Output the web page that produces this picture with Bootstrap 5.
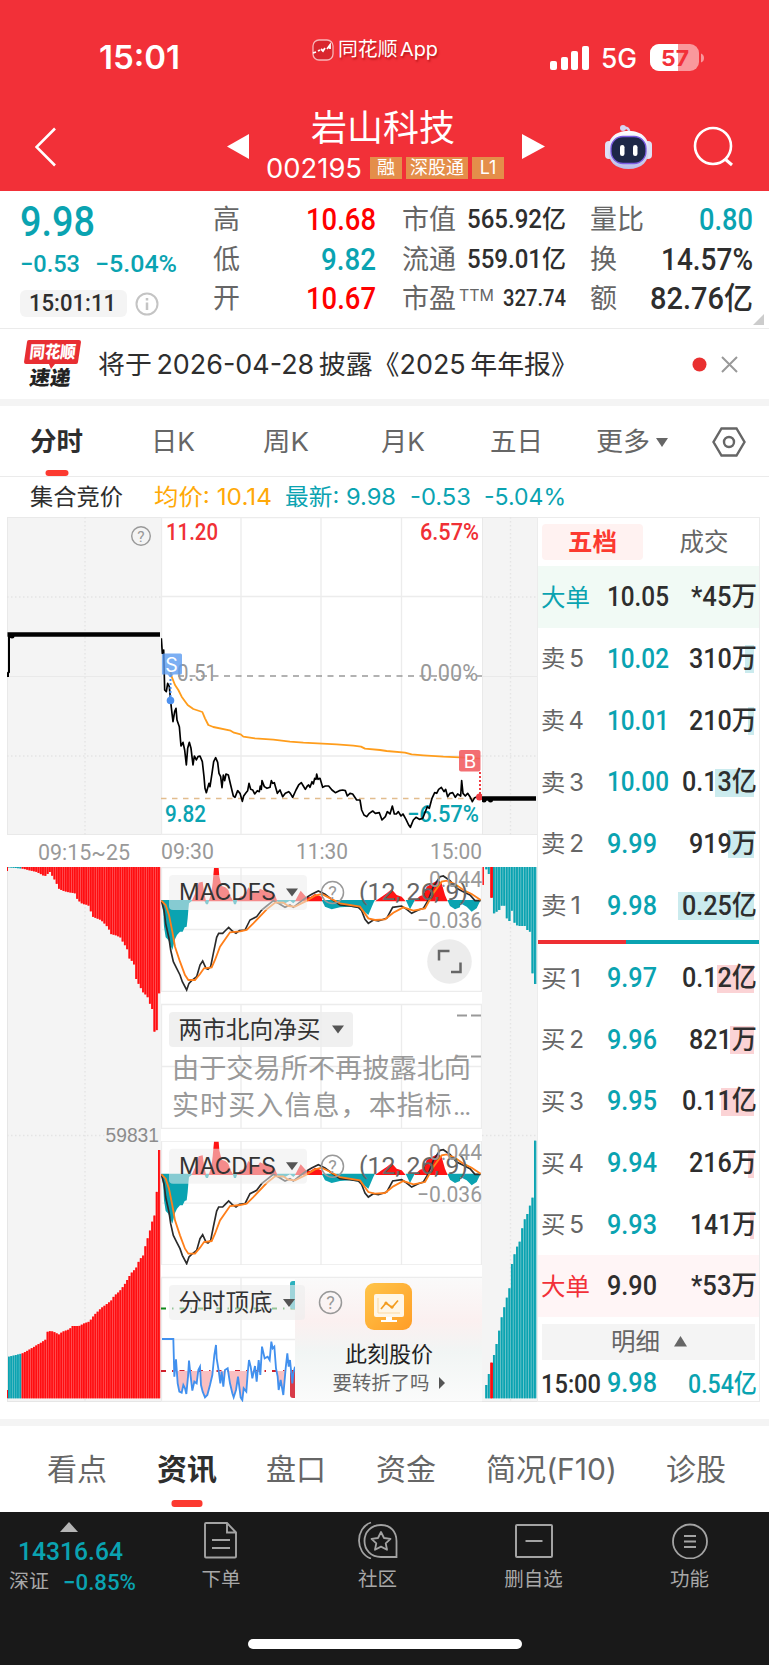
<!DOCTYPE html>
<html lang="zh-CN">
<head>
<meta charset="utf-8">
<meta name="viewport" content="width=device-width, initial-scale=1">
<title>岩山科技 002195</title>
<link href="https://cdn.jsdelivr.net/npm/bootstrap@5.3.0/dist/css/bootstrap.min.css" rel="stylesheet">
<style>
:root{--teal:#0aa3b1;--up:#f72f33;--ink:#2e2e2e;--dim:#666;--ui:Inter,"Noto Sans CJK SC",sans-serif;--num:Roboto,"Noto Sans CJK SC",sans-serif}
body{font-family:var(--ui);color:var(--ink);background:#fff;width:769px;line-height:1;overflow-x:hidden}
svg{display:block;flex:none}
svg text{font-family:var(--num)}
.fit{display:inline-block;white-space:nowrap;transform-origin:0 50%;flex:none}
.din{font-family:var(--num);font-weight:500}
.teal{color:var(--teal)}.up{color:#f00}.dim{color:var(--dim)}
.abs-grid{display:grid;align-items:center}
.top-red{background:#f23038;height:191px;color:#fff}
.status-row{height:99px;padding-top:17px;grid-template-columns:99px 213px 26px 212px 51px 49px 1fr}
.title-row{height:92px;padding-top:4px;grid-template-columns:35px 192px 39px 256px 83px 88px 1fr}
.tagbox{background:#e48e4a;height:22px;font-size:18px;display:flex;align-items:center;justify-content:center}
.quote{height:137px;padding:0 15px 0 20px;display:grid;grid-template-columns:193px 163px 26px 164px 24px 163px}
.qcol{padding-top:9px}
.qcol>div{height:39.5px;display:flex;align-items:center;justify-content:space-between}
.qcol .dim{font-size:27px}
.pill-time{background:#f4f4f4;border-radius:6px;width:107px;height:27px;padding-left:9px}
.notice{height:71px;border-top:1.5px solid #ebebeb;grid-template-columns:24px 74px 594px 29px 1fr}
.band{background:#f4f4f4;height:7px}
.periods{height:71px;padding-top:2px;border-bottom:1.5px solid #ebebeb;font-size:26px;color:var(--dim);grid-template-columns:30px 121px 112px 118px 109px 106px 60px 56px 1fr}
.on{color:var(--ink);font-weight:700;position:relative}
.on::after{content:"";position:absolute;left:50%;transform:translateX(-50%);background:#fc3a30;border-radius:3px}
.periods .on::after{width:23px;height:6px;bottom:-21px}
.legend-row{height:40px;padding-top:1px;font-size:23px;grid-template-columns:30px 124px 131px 125px 74px 1fr}
.board{padding:0 9px 0 7px;height:885px}
.col-a{width:154px}.col-m{width:321px}.col-c{width:55px}
.col-b{width:223px;border:1px solid #ececec}
.strip{height:32px}
.seg{display:grid;grid-template-columns:1fr 1fr;height:48px;padding:6px 1px 6px 4px;font-size:24.5px;text-align:center}
.seg span{height:36px;line-height:36px;border-radius:4px}
.seg .sel{background:#fff2f1;color:#fc3a30;font-weight:700;width:101px}
.lv{height:61.65px;display:grid;grid-template-columns:66px 1fr auto;align-items:center;padding:2px 2px 0 3px}
.lv .nm{color:var(--dim);font-size:24px;word-spacing:-3px}
.lv .vol{position:relative;text-align:right}
.lv .vol i{position:absolute;right:3px;top:50%;height:28px;margin-top:-14px}
.lv .vol .fit{position:relative}
.lv .din{font-size:27px}
.sell i{background:#cbebee}.buy i{background:#fbd3d5}
.ratio{height:11px;padding-top:4px}
.ratio-line{height:4.5px;background:linear-gradient(90deg,#ee2f33 40%,#0aa3b1 40%)}
.more{background:#f4f4f4;margin:7px 4px 0;height:36px;font-size:24px;color:var(--dim)}
.news{height:86px;padding-top:2px;font-size:29.5px;color:var(--dim);grid-template-columns:47px 110px 109px 110px 110px 180px 1fr}
.news .on::after{width:31px;height:7px;bottom:-22px}
.dock{background:#191919;height:153px;color:#a8a8a8;font-size:19.5px;position:relative}
.dock-in{display:grid;grid-template-columns:143px 156px 157px 155px 157px;height:86px}
.dock-in>div{display:flex;flex-direction:column;align-items:center;padding-top:9px}
.dock-in>div>svg{margin-bottom:11px}
.homebar{width:274px;height:10px;border-radius:5px;background:#fff;margin:41px 0 0 248px}
</style>
</head>
<body>
<header class="top-red">
  <div class="status-row abs-grid">
    <span></span>
    <span class="fit" data-w="81" style="font-size:32px;font-weight:600">15:01</span>
    <svg width="22" height="22" viewBox="0 0 22 22" style="margin-top:-17px"><rect x="1" y="1" width="20" height="20" rx="6" fill="#d9262e" stroke="#fff" stroke-opacity=".65" stroke-width="1.300"/><path d="M1 14l3-1m2-1l2-1m1-1l2 2 2-3m2 1l3-4v4" stroke="#fff" stroke-width="1.800" fill="none"/></svg>
    <span class="fit" data-w="100" style="font-size:19px;margin-top:-17px;word-spacing:-3px;text-shadow:1px 2px 2px #8008">同花顺 App</span>
    <svg width="40" height="26" viewBox="0 0 40 26" fill="#fff"><rect y="16" width="7" height="9" rx="2"/><rect x="11" y="12" width="7" height="13" rx="2"/><rect x="21" y="6" width="7" height="19" rx="2"/><rect x="32" y="1" width="7" height="24" rx="2"/></svg>
    <span class="fit" data-w="36" style="font-size:27px;font-weight:500">5G</span>
    <svg width="56" height="28" viewBox="0 0 56 28"><defs><clipPath id="bt"><rect width="49" height="27" rx="9"/></clipPath></defs><g clip-path="url(#bt)"><rect width="49" height="27" fill="#fff" fill-opacity=".5"/><rect width="28" height="27" fill="#fff"/></g><path d="M51 9.500q3 1 3 4.500t-3 4.500z" fill="#fff" fill-opacity=".5"/><text x="11" y="21.500" font-size="22" font-weight="700" fill="#f23038" textLength="28" lengthAdjust="spacingAndGlyphs" style="font-family:Inter">57</text></svg>
  </div>
  <div class="title-row abs-grid">
    <span></span>
    <svg width="22" height="40" viewBox="0 0 22 40"><path d="M20 1.500L1.500 20 20 38.500" fill="none" stroke="#fff" stroke-width="2.600"/></svg>
    <svg width="22" height="26" viewBox="0 0 22 26"><path d="M22 0v25L0 12.500z" fill="#fff"/></svg>
    <div>
      <div class="fit" data-w="144" style="font-size:36px;margin:-3px 0 9px 45px">岩山科技</div>
      <div class="d-flex align-items-center"><span class="fit" data-w="96" style="font-size:27px">002195</span><span class="tagbox" style="width:32px;margin-left:8px">融</span><span class="tagbox" style="width:62px;margin-left:4px">深股通</span><span class="tagbox" style="width:32px;margin-left:4px">L1</span></div>
    </div>
    <svg width="23" height="26" viewBox="0 0 23 26"><path d="M0 0v25l23-12.500z" fill="#fff"/></svg>
    <svg width="48" height="46" viewBox="0 0 48 46"><defs><linearGradient id="rb" x2="0" y2="1"><stop stop-color="#fff"/><stop offset="1" stop-color="#b9bde8"/></linearGradient></defs><circle cx="18" cy="4" r="3" fill="#d6d4f2"/><path d="M18 4q7-1 6 5" stroke="#d6d4f2" stroke-width="2.500" fill="none"/><rect y="17" width="8" height="18" rx="4" fill="#dfe0f6"/><rect x="39" y="17" width="8" height="18" rx="4" fill="#dfe0f6"/><path d="M23.500 7C38 7 44 15 44 26S37 45 23.500 45 3 37 3 26 9 7 23.500 7z" fill="url(#rb)"/><rect x="6" y="12.500" width="35" height="27" rx="12" fill="#1d2747" stroke="#7a5be0" stroke-width="1.300"/><rect x="15" y="21" width="4.500" height="11" rx="2.200" fill="#fff"/><rect x="28" y="21" width="4.500" height="11" rx="2.200" fill="#fff"/></svg>
    <svg width="42" height="42" viewBox="0 0 42 42"><circle cx="20" cy="20" r="18" fill="none" stroke="#fff" stroke-width="2.600"/><path d="M32 33l7 6" stroke="#fff" stroke-width="3"/></svg>
  </div>
</header>

<section class="quote">
  <div>
    <div class="fit din teal d-block" data-w="75" style="font-size:43px;margin-top:9px">9.98</div>
    <div class="d-flex din teal" style="font-size:24px;margin-top:9px"><span class="fit" data-w="60" style="margin-right:15px">−0.53</span><span class="fit" data-w="82">−5.04%</span></div>
    <div class="d-flex align-items-center" style="margin-top:14px"><span class="pill-time d-flex align-items-center"><span class="fit din" data-w="87" style="font-size:24.500px">15:01:11</span></span>
    <svg class="ms-2" width="24" height="24" viewBox="0 0 24 24" fill="none" stroke="#c4c4c4" stroke-width="2"><circle cx="12" cy="12" r="10.500"/><path d="M12 10.500v7.500M12 6v2.500" stroke-width="2.500"/></svg></div>
  </div>
  <div class="qcol">
    <div><span class="dim">高</span><span class="fit din up" data-w="70" style="font-size:31px">10.68</span></div>
    <div><span class="dim">低</span><span class="fit din teal" data-w="55" style="font-size:31px">9.82</span></div>
    <div><span class="dim">开</span><span class="fit din up" data-w="70" style="font-size:31px">10.67</span></div>
  </div>
  <div></div>
  <div class="qcol">
    <div><span class="dim">市值</span><span class="fit din" data-w="99" style="font-size:25px">565.92亿</span></div>
    <div><span class="dim">流通</span><span class="fit din" data-w="99" style="font-size:25px">559.01亿</span></div>
    <div><span class="dim">市盈</span><span class="fit dim" data-w="35" style="font-size:16px;margin:-7px 0 0 3px">TTM</span><span class="fit din ms-auto" data-w="63" style="font-size:23px">327.74</span></div>
  </div>
  <div></div>
  <div class="qcol position-relative">
    <div><span class="dim">量比</span><span class="fit din teal" data-w="54" style="font-size:31px">0.80</span></div>
    <div><span class="dim">换</span><span class="fit din" data-w="92" style="font-size:31px">14.57%</span></div>
    <div><span class="dim">额</span><span class="fit din" data-w="103" style="font-size:31px">82.76亿</span></div>
    <svg class="position-absolute" style="right:-11px;bottom:3px" width="11" height="11"><path d="M11 0v11H0z" fill="#ccc"/></svg>
  </div>
</section>

<section class="notice abs-grid">
  <span></span>
  <svg width="58" height="48" viewBox="0 0 58 48" overflow="visible"><path d="M5 0h50q2 0 2 2l-3 20q0 2-2 2H31l-4 5-2-5H2q-2 0-2-2L3 2q0-2 2-2z" fill="#e82e32"/><text x="5" y="18.500" font-size="17" font-weight="900" fill="#fff" textLength="46" lengthAdjust="spacingAndGlyphs" transform="skewX(-6) translate(2 0)">同花顺</text><text x="6" y="45" font-size="20" font-weight="900" fill="#222" textLength="41" lengthAdjust="spacingAndGlyphs" transform="skewX(-8) translate(5 0)">速递</text></svg>
  <span class="fit" data-w="480" style="font-size:26.500px;word-spacing:-3px">将于 2026-04-28 披露《2025 年年报》</span>
  <svg width="15" height="15"><circle cx="7.500" cy="7.500" r="7" fill="#e93030"/></svg>
  <svg width="17" height="17" viewBox="0 0 17 17"><path d="M1 1l15 15M16 1L1 16" stroke="#999" stroke-width="2"/></svg>
</section>
<div class="band"></div>

<nav class="periods abs-grid">
  <span></span><span class="fit on" data-w="53">分时</span><span class="fit" data-w="44">日K</span><span class="fit" data-w="46">周K</span><span class="fit" data-w="44">月K</span><span class="fit" data-w="53">五日</span><span class="fit" data-w="54">更多</span>
  <svg width="12" height="9"><path d="M0 0h12L6 9z" fill="#666"/></svg>
  <svg width="34" height="30" viewBox="0 0 34 30" fill="none" stroke="#666" stroke-width="2.400"><path d="M9.500 1.500h15L32.500 15l-8 13.500h-15L1.500 15z"/><circle cx="17" cy="15" r="5"/></svg>
</nav>
<div class="legend-row abs-grid">
  <span></span><span class="fit" data-w="93">集合竞价</span><span class="fit" data-w="118" style="color:#ffa908">均价: 10.14</span><span class="fit teal" data-w="111">最新: 9.98</span><span class="fit teal" data-w="61">-0.53</span><span class="fit teal" data-w="82">-5.04%</span>
</div>

<main class="board d-flex">
  <div class="col-a">
    <svg width="154" height="318" viewBox="7 517 154 318">
      <rect x="7" y="517" width="154" height="318" fill="#f4f4f4"/>
      <path d="M7 517.500h154M7 676.500h154M7 834.500h154M7.500 517v318" stroke="#e9e9e9"/>
      <path d="M85 517v318M7 597h154M7 756h154" stroke="#e4e4e4" stroke-width="1.300" stroke-dasharray="1.500 2.500"/>
      <path d="M8 677v-4l1-1v-37" stroke="#000" stroke-width="2" fill="none"/><path d="M7.500 634.500h152.500" stroke="#000" stroke-width="4.500"/><circle cx="12" cy="636" r="2.500"/>
      <circle cx="141" cy="536" r="9.300" fill="none" stroke="#999" stroke-width="1.400"/><text x="141" y="541.500" font-size="15.500" fill="#999" text-anchor="middle">?</text>
    </svg>
    <div class="strip"><svg width="154" height="32" viewBox="7 835 154 32" fill="#999" font-size="22"><text x="38" y="860" textLength="92" lengthAdjust="spacingAndGlyphs">09:15~25</text></svg></div>
    <svg width="154" height="535" viewBox="7 867 154 535">
      <rect x="7" y="867" width="154" height="535" fill="#f4f4f4"/>
      <path d="M7.500 867v535M7 1401.500h154" stroke="#e6e6e6"/>
      <path d="M85 867v535M7 1135.500h98" stroke="#e4e4e4" stroke-width="1.300" stroke-dasharray="1.500 2.500"/>
      <g id="volA"></g>
      <text x="105.500" y="1142" font-size="19.500" fill="#8c8c8c" textLength="53.500" lengthAdjust="spacingAndGlyphs" style="font-family:'Liberation Sans'">59831</text>
    </svg>
  </div>

  <div class="col-m">
    <svg width="321" height="318" viewBox="161 517 321 318">
      <path d="M161 517.500h321M161 596.500h321M161 756h321M161 834.500h321M161.500 517v318M241 517v318M321 517v318M401.500 517v318" stroke="#ececec" stroke-width="1.300" fill="none"/>
      <path d="M161 798.500h321" stroke="#e2bd8e" stroke-width="1.500" stroke-dasharray="5.500 5.500"/>
      <path d="M178 676h304" stroke="#999" stroke-width="1.500" stroke-dasharray="6 5.500"/>
      <g font-size="23" font-weight="500">
        <text x="166" y="539.500" fill="#f03035" textLength="52" lengthAdjust="spacingAndGlyphs">11.20</text>
        <text x="420" y="539.500" fill="#f03035" textLength="59" lengthAdjust="spacingAndGlyphs">6.57%</text>
        <text x="165" y="821.500" fill="#0aa3b1" textLength="41" lengthAdjust="spacingAndGlyphs">9.82</text>
        <text x="407" y="821.500" fill="#0aa3b1" textLength="72" lengthAdjust="spacingAndGlyphs">−6.57%</text>
        <g fill="#999" font-weight="400"><text x="177" y="680.500" textLength="40" lengthAdjust="spacingAndGlyphs">0.51</text><text x="420" y="680.500" textLength="58" lengthAdjust="spacingAndGlyphs">0.00%</text></g>
      </g>
      <g fill="none" stroke-linejoin="round">
        <polyline transform="translate(0 510) scale(.33333)" stroke="#ff9d1c" stroke-width="5.500" points="510,480 515,500 525,525 535,540 545,560 563,585 580,597 607,606 615,625 625,645 640,651 692,662 702,668 722,673 730,680 765,685 820,689 870,695 910,698 1010,703 1060,707 1083,710 1095,716 1140,720 1160,723 1215,728 1235,733 1270,736 1330,740 1380,742 1440,746"/>
        <polyline transform="translate(0 510) scale(.33333)" stroke="#000" stroke-width="5" points="484,385 487,430 491,420 494,540 499,545 503,520 508,530 512,575 516,610 519,635 524,605 528,595 531,630 538,650 543,708 549,697 554,720 559,765 563,715 568,697 573,715 579,765 583,738 589,750 594,740 600,738 607,755 612,800 615,835 619,848 627,820 630,830 636,790 641,755 647,743 653,757 657,790 662,800 666,833 670,795 674,812 678,792 685,795 692,825 700,858 705,862 713,842 720,850 727,874 731,858 738,848 743,842 747,820 752,838 758,840 764,852 772,842 778,845 781,828 784,838 786,812 793,830 801,835 810,832 814,812 818,820 823,818 832,850 840,840 848,860 856,850 866,845 871,850 878,862 888,840 896,825 904,818 910,828 916,838 922,828 926,825 930,832 936,815 940,822 944,805 948,808 950,792 954,808 960,805 968,832 976,828 986,828 996,840 1006,848 1018,842 1028,840 1036,842 1042,858 1050,850 1058,852 1070,870 1080,870 1085,900 1092,915 1100,920 1108,910 1118,903 1126,910 1138,908 1146,930 1156,920 1162,905 1170,912 1177,888 1183,912 1189,912 1195,905 1203,918 1209,912 1218,928 1226,945 1231,952 1240,930 1248,922 1258,928 1268,925 1276,905 1282,890 1288,895 1296,865 1304,848 1310,850 1316,838 1324,832 1332,845 1337,838 1343,860 1350,850 1358,848 1366,862 1373,852 1382,858 1385,812 1389,850 1396,858 1403,850 1411,862 1417,875 1424,863 1432,860 1440,860"/>
      </g>
      <path d="M170.500 675v24" stroke="#4c90ee" stroke-width="2" stroke-dasharray="2 2"/><circle cx="170.500" cy="700.500" r="3.800" fill="#4c90ee"/>
      <path d="M163.500 653.500h17q1.500 0 1.500 1.500v18q0 1.500-1.500 1.500h-7l-3 3-3-3h-5.500v-20z" fill="#5b9bf0" fill-opacity=".8"/><text x="171.500" y="671.500" font-size="19.500" fill="#fff" text-anchor="middle" style="font-family:Inter">S</text>
      <path d="M480 772v24" stroke="#ef3b40" stroke-width="2" stroke-dasharray="2 2"/><circle cx="479.500" cy="797" r="3.500" fill="#ef3b40"/>
      <rect x="459" y="750" width="21.500" height="21.500" rx="2" fill="#f15a5e" fill-opacity=".88"/><text x="470" y="768" font-size="19" fill="#fff" text-anchor="middle" style="font-family:Inter">B</text>
    </svg>
    <div class="strip"><svg width="321" height="32" viewBox="161 835 321 32" fill="#999" font-size="22"><text x="161" y="859" textLength="53" lengthAdjust="spacingAndGlyphs">09:30</text><text x="296" y="859" textLength="52" lengthAdjust="spacingAndGlyphs">11:30</text><text x="430" y="859" textLength="52" lengthAdjust="spacingAndGlyphs">15:00</text></svg></div>

    <svg width="321" height="125" viewBox="161 867 321 125">
      <defs><g id="macd">
        <path d="M161 867.500h321M161 929.500h321M161 991.300h321M161.500 867v125M241 867v125M321 867v125M401.500 867v125M481.500 867v125" stroke="#ececec" stroke-width="1.300" fill="none"/>
        <g transform="translate(0 850) scale(.33333)">
          <path fill="#0aa3b1" d="M484,150 490,190 492,230 497,262 505,270 517,300 525,268 531,255 540,245 548,245 554,232 560,230 563,205 565,180 567,160 580,150M612,150 618,163 624,163 628,150M698,150 702,163 708,163 712,150M828,150 840,162 855,160 870,152 880,160 890,150M965,150 975,170 995,178 1020,172 1050,170 1080,175 1105,195 1120,160 1125,150M1217,150 1230,178 1242,155 1245,150M1342,150 1350,168 1365,178 1380,172 1381,160 1400,170 1415,185 1430,175 1442,150z"/>
          <path fill="#ff1414" d="M575,154 588,125 596,98 608,95 612,125 618,154M626,154 634,130 638,98 642,54 656,54 658,80 665,108 676,112 685,120 692,140 700,154M710,154 720,140 735,135 745,112 760,128 772,128 780,116 800,125 825,135 832,154M885,154 902,122 918,140 930,142 945,132 965,140 967,154M1125,154 1145,140 1160,130 1175,118 1190,135 1205,140 1217,154M1242,154 1260,138 1270,135 1280,110 1300,98 1315,90 1325,100 1335,135 1343,154z"/>
          <polyline fill="none" stroke="#2b2b2b" stroke-width="5" points="484,152 492,180 497,220 507,265 512,300 520,335 530,355 540,375 547,395 560,420 567,400 575,392 590,380 600,345 608,333 618,355 624,358 632,350 640,310 650,262 656,250 668,250 675,243 686,232 697,243 708,250 718,242 735,240 750,210 770,200 785,180 800,168 820,152 835,160 855,172 870,165 880,172 895,160 915,145 935,133 955,123 975,133 995,148 1020,165 1050,168 1075,172 1085,182 1095,208 1105,220 1120,210 1135,213 1160,205 1178,172 1205,168 1220,178 1235,190 1255,180 1270,175 1285,150 1300,110 1320,80 1330,78 1350,92 1370,115 1390,125 1410,135 1425,152 1442,152"/>
          <polyline fill="none" stroke="#ff7f1a" stroke-width="5.500" points="484,152 497,165 507,195 517,245 525,290 540,335 555,375 565,390 585,390 600,372 612,355 635,352 645,330 660,290 690,247 720,244 740,240 760,220 800,178 825,158 850,158 865,168 885,170 915,155 945,137 965,132 985,142 1020,160 1080,170 1105,205 1125,210 1155,208 1180,188 1210,172 1240,182 1275,175 1300,130 1325,95 1340,92 1365,102 1390,120 1415,132 1442,150"/>
        </g>
        <rect x="169" y="875" width="138" height="35" rx="4" fill="#ececec" fill-opacity=".55"/>
        <path d="M286 888.500h12l-6 8z" fill="#555"/>
        <text x="179" y="900" font-size="22.500" fill="#333" textLength="97" lengthAdjust="spacingAndGlyphs" style="font-family:Inter">MACDFS</text>
        <circle cx="332.500" cy="892.500" r="11" fill="none" stroke="#999" stroke-width="1.500"/><text x="332.500" y="899" font-size="18" fill="#999" text-anchor="middle">?</text>
        <text x="359" y="900" font-size="23" fill="#666" textLength="109" lengthAdjust="spacingAndGlyphs">(12, 26, 9)</text>
        <g font-size="22.500" fill="#999"><text x="429" y="886.500" textLength="53" lengthAdjust="spacingAndGlyphs">0.044</text><text x="417" y="928" textLength="65" lengthAdjust="spacingAndGlyphs">−0.036</text></g>
      </g></defs>
      <use href="#macd"/>
      <circle cx="449.500" cy="961.500" r="22.300" fill="#ececec"/><path d="M439 960.500v-9.500h10.500M451 972h9.500v-9.500" fill="none" stroke="#666" stroke-width="2.500"/>
    </svg>

    <svg width="321" height="149" viewBox="161 992 321 149">
      <path d="M161 1004.500h321M161 1066.500h321M161 1128.300h321M161.500 1004v124M241 1004v124M321 1004v124M401.500 1004v124M481.500 1004v124" stroke="#ececec" stroke-width="1.300" fill="none"/>
      <path d="M457 1015.500h10m4 0h10M457 1056.500h10m4 0h10" stroke="#999" stroke-width="1.800"/>
      <rect x="169" y="1012" width="184" height="35" rx="4" fill="#ececec" fill-opacity=".8"/>
      <text x="178.500" y="1038" font-size="24" fill="#333" textLength="142" lengthAdjust="spacingAndGlyphs">两市北向净买</text><path d="M332 1025.500h12l-6 8z" fill="#555"/>
      <g font-size="27" fill="#999"><text x="172" y="1077.500" textLength="299" lengthAdjust="spacingAndGlyphs">由于交易所不再披露北向</text><text x="172" y="1115" textLength="299" lengthAdjust="spacing">实时买入信息，本指标…</text></g>
    </svg>
    <svg width="321" height="124" viewBox="161 867.300 321 124"><use href="#macd"/></svg>
    <svg width="321" height="137" viewBox="161 1265 321 137">
      <defs><clipPath id="low"><path d="M161 1371h134v31H161z"/></clipPath><clipPath id="lft"><path d="M161 1265h134v137H161z"/></clipPath>
      <linearGradient id="pg" x2="0" y2="1"><stop stop-color="#fafafa"/><stop offset=".35" stop-color="#fbf0f0"/><stop offset=".6" stop-color="#f1f5f4"/><stop offset="1" stop-color="#fbfbfb"/></linearGradient></defs>
      <path d="M161 1277.500h321M161 1339.500h134M161 1401.300h321M161.500 1277v124M241 1277v124" stroke="#ececec" stroke-width="1.300" fill="none"/>
      <path d="M161 1308.500h134" stroke="#118a1c" stroke-width="2" stroke-dasharray="5 6 1.500 6"/><path d="M161 1371h134" stroke="#cf1f2b" stroke-width="2" stroke-dasharray="5 6 1.500 6"/>
      <g clip-path="url(#low)"><path id="lowfill" fill="#f9bfc1" transform="translate(0 1120) scale(.33333)"/></g>
      <rect x="290" y="1281" width="12" height="28" rx="3" fill="#2bb0bd" clip-path="url(#lft)"/><rect x="290" y="1371" width="12" height="27" rx="3" fill="#d83a48" clip-path="url(#lft)"/>
      <polyline id="blue" transform="translate(0 1120) scale(.33333)" fill="none" stroke="#4190ee" stroke-width="5.500" points="486,657 520,657 523,770 528,718 533,790 538,815 545,818 550,795 555,805 559,822 564,770 567,722 572,770 577,812 583,785 590,790 595,750 600,740 603,795 608,815 615,832 622,825 630,795 637,765 643,705 648,675 650,715 656,752 661,790 665,755 670,800 675,750 683,745 690,790 697,820 701,832 708,810 714,770 722,832 727,840 731,805 739,815 743,760 747,720 752,740 757,775 765,738 770,785 776,720 781,765 786,680 794,715 803,710 809,720 814,665 818,685 823,680 828,745 833,770 836,810 842,780 850,825 857,745 862,700 866,740 870,720 877,790 880,760 885,740"/>
      <rect x="295" y="1278" width="187" height="123" fill="url(#pg)"/>
      <rect x="169" y="1285" width="136" height="35" rx="4" fill="#ececec" fill-opacity=".6"/>
      <text x="178.500" y="1311" font-size="23.500" fill="#333" textLength="94" lengthAdjust="spacingAndGlyphs">分时顶底</text><path d="M283 1299h12l-6 8z" fill="#555"/>
      <circle cx="330.500" cy="1302.500" r="11" fill="none" stroke="#999" stroke-width="1.500"/><text x="330.500" y="1309" font-size="18" fill="#999" text-anchor="middle">?</text>
      <defs><linearGradient id="og" x2="1" y2="1"><stop stop-color="#ffc54a"/><stop offset="1" stop-color="#ff9d26"/></linearGradient></defs>
      <rect x="365" y="1283" width="47" height="47" rx="9" fill="url(#og)"/><rect x="374" y="1294" width="30" height="23" rx="2" fill="#fff6e6"/><path d="M386 1317h6v3h5v2h-16v-2h5z" fill="#fff"/><path d="M378 1298v15h22" fill="none" stroke="#fdd9a0" stroke-width="1"/><path d="M381 1309l5-6 6 4.500 6-7" fill="none" stroke="#f39c1f" stroke-width="1.700"/><circle cx="386" cy="1303" r="1.600" fill="#f39c1f"/><circle cx="392" cy="1307" r="1.600" fill="#f39c1f"/>
      <text x="345" y="1362" font-size="22" fill="#222" textLength="88" lengthAdjust="spacingAndGlyphs">此刻股价</text>
      <text x="332.500" y="1390" font-size="19.500" fill="#666" textLength="97" lengthAdjust="spacingAndGlyphs">要转折了吗</text><path d="M439 1377v12l6-6z" fill="#555"/>
    </svg>
  </div>

  <div class="col-c">
    <svg width="55" height="318" viewBox="482 517 55 318">
      <rect x="482" y="517" width="55" height="318" fill="#f4f4f4"/><path d="M482 517.500h55M482 676.500h55M482 834.500h55M482.500 517v318" stroke="#e9e9e9"/>
      <path d="M510.500 517v318M482 597h55M482 756h55" stroke="#e4e4e4" stroke-width="1.300" stroke-dasharray="1.500 2.500"/>
      <path d="M482 798.500h54" stroke="#000" stroke-width="4.500"/><circle cx="484" cy="800" r="2.500"/><circle cx="490.500" cy="800" r="2.500"/>
    </svg>
    <div class="strip"></div>
    <svg width="55" height="535" viewBox="482 867 55 535">
      <rect x="482" y="867" width="55" height="535" fill="#f4f4f4"/><path d="M482 1401.500h55" stroke="#e6e6e6"/>
      <path d="M510.500 867v535M482 1135.500h55" stroke="#e4e4e4" stroke-width="1.300" stroke-dasharray="1.500 2.500"/>
      <g id="volC"></g>
    </svg>
  </div>

  <div class="col-b" id="book">
    <div class="seg"><span class="sel">五档</span><span class="dim">成交</span></div>
  </div>
</main>
<div style="height:17px"></div>
<div class="band"></div>

<nav class="news abs-grid">
  <span></span><span class="fit" data-w="60">看点</span><span class="fit on" data-w="60">资讯</span><span class="fit" data-w="60">盘口</span><span class="fit" data-w="60">资金</span><span class="fit" data-w="131">简况(F10)</span><span class="fit" data-w="60">诊股</span>
</nav>
<footer class="dock">
  <div class="dock-in">
    <div style="align-items:flex-start!important">
      <svg width="18" height="11" style="margin:0 0 6px 60px"><path d="M0 11L9 1l9 10z" fill="#b5b5b5"/></svg>
      <span class="fit din teal" data-w="105" style="font-size:26.500px;margin-left:18px">14316.64</span>
      <span class="d-flex align-items-center" style="margin:6px 0 0 9px"><span class="fit" data-w="40">深证</span><span class="fit din teal" data-w="73" style="font-size:22.500px;margin-left:14px">−0.85%</span></span>
    </div>
    <div><svg width="36" height="38" viewBox="0 0 36 38" fill="none" stroke="#a3a3a3" stroke-width="1.900"><path d="M3 2h21l9 9.500V35.500q0 1-1 1H3q-1 0-1-1V3q0-1 1-1zM24 2v9.500h9M9 19h18M9 27h18"/></svg>下单</div>
    <div><svg width="42" height="38" viewBox="0 0 42 38" fill="none" stroke="#a3a3a3" stroke-width="1.800"><path d="M39.500 36H24C14 36 7.500 29 7.500 20S14 4 24 4s15.500 7 15.500 16z"/><path d="M14 1.500C6 4 2 12 2 19.500S6 35 14 37.500"/><path d="M24 11l3 6 6.500.8-4.800 4.500 1.300 6.500-6-3.200-6 3.200 1.300-6.500-4.800-4.500L21 17z" stroke-linejoin="round"/></svg>社区</div>
    <div><svg width="38" height="38" viewBox="0 0 38 38" fill="none" stroke="#a3a3a3" stroke-width="2"><rect x="1" y="4" width="36" height="32" rx="1"/><path d="M10.500 20h17"/></svg>删自选</div>
    <div><svg width="38" height="38" viewBox="0 0 38 38" fill="none" stroke="#a3a3a3" stroke-width="1.800"><circle cx="19" cy="20.500" r="17"/><path d="M13 15h12M13 20.500h12M13 26h12"/></svg>功能</div>
  </div>
  <div class="homebar"></div>
</footer>

<script src="https://cdn.jsdelivr.net/npm/bootstrap@5.3.0/dist/js/bootstrap.bundle.min.js"></script>
<script>
// order book
const sells=[['卖 5','10.02','310万',9],['卖 4','10.01','210万',6],['卖 3','10.00','0.13亿',39],['卖 2','9.99','919万',26],['卖 1','9.98','0.25亿',76]];
const buys=[['买 1','9.97','0.12亿',37],['买 2','9.96','821万',24],['买 3','9.95','0.11亿',33],['买 4','9.94','216万',6],['买 5','9.93','141万',4]];
const volW=v=>v.startsWith('*')?66:v.includes('亿')?75:v.startsWith('141')?67:68;
const lv=(cls,[n,p,v,bar],bg='',nc='',pc='teal')=>`<div class="lv ${cls}" style="background:${bg}"><span class="nm fit" data-w="${nc?49:n.endsWith('1')?40:43}" style="color:${nc}">${n}</span><span class="fit din ${pc}" data-w="${p.length>4?62:50}">${p}</span><span class="vol">${bar?`<i style="width:${bar}px"></i>`:''}<span class="fit din" data-w="${volW(v)}">${v}</span></span></div>`;
document.getElementById('book').insertAdjacentHTML('beforeend',
  lv('',['大单','10.05','*45万'],'#f1faf5','#0aa3b1','')+sells.map(r=>lv('sell',r)).join('')+
  '<div style="height:11px;padding-top:4px"><div class="ratio-line"></div></div>'+
  buys.map(r=>lv('buy',r)).join('')+lv('',['大单','9.90','*53万'],'#fff5f6','#f23038','')+
  '<div class="more d-flex align-items-center justify-content-center"><span class="fit" data-w="49">明细</span><svg width="13" height="11" style="margin-left:14px"><path d="M0 10.500L6.500 0 13 10.500z" fill="#666"/></svg></div>'+
  '<div class="lv" style="height:42px;padding-top:6px"><span class="fit din" data-w="60" style="font-size:26px">15:00</span><span class="fit din teal" data-w="50">9.98</span><span class="vol teal"><span class="fit din" data-w="69" style="font-size:26px">0.54亿</span></span></div>');

// volume histograms, heights interpolated between key points
const lerp=(k,x)=>{for(let i=1;i<k.length;i++)if(x<=k[i][0]){const[a,b]=[k[i-1],k[i]];return a[1]+(b[1]-a[1])*(x-a[0])/(b[0]-a[0])}return k[k.length-1][1]};
const bar=(x,y1,y2,w,c)=>`<rect x="${x.toFixed(2)}" y="${Math.min(y1,y2).toFixed(1)}" width="${w}" height="${Math.abs(y2-y1).toFixed(1)}" fill="${c}"/>`;
const R='#ff0d10',T='#0aa3b1';
const upK=[[21,52],[66,56],[90,62],[105,65],[125,75],[130,80],[148,65],[155,80],[165,95],[172,115],[185,122],[200,126],[222,130],[230,150],[245,162],[262,165],[270,185],[275,200],[300,210],[315,225],[325,240],[330,252],[345,256],[358,262],[368,280],[378,295],[385,325],[395,335],[400,345],[405,385],[412,400],[420,415],[428,430],[436,435],[442,445],[448,465],[455,480],[460,545],[468,540],[474,430]];
const dnK=[[24,710],[45,705],[65,700],[80,692],[100,680],[120,668],[135,658],[140,635],[150,633],[165,638],[172,645],[185,635],[205,628],[215,618],[235,618],[250,610],[265,605],[280,585],[300,565],[330,543],[340,527],[355,515],[370,495],[390,460],[405,445],[415,420],[428,405],[434,375],[446,335],[455,300],[462,283],[466,240],[474,90]];
let s=bar(7,867,871,1,R)+bar(7,1390,1398.3,1,R);
for(let i=0;i<67;i++){const c=24+i*6.82,x=c/3,t=i<6;
  s+=bar(x,867,850+lerp(upK,c)/3,2.28,t?'#62c0c8':'#ff5558')+bar(x,867,850+lerp(upK,c)/3,1.7,t?T:R);
  s+=bar(x,1120+lerp(dnK,c)/3,1398.3,2.28,t?'#62c0c8':'#ff5558')+bar(x,1120+lerp(dnK,c)/3,1398.3,1.7,t?T:R)}
document.getElementById('volA').innerHTML=s;
const up=[105,58,72,143,190,185,180,167,167,205,213,182,218,226,228,228,228,240,245,370,402];
const dn=[835,795,762,728,705,672,632,592,562,533,505,432,403,380,365,325,298,282,257,233,62];
s='';
up.forEach((v,i)=>{const x=290+(576+i*7.7)/3+.7,red=i===3||i===0;
  s+=bar(x,867,850+v/3,i?2.57:1,red?R:'#6fc5cc')+bar(x,867,850+v/3,i?1.8:1,red?R:T);
  if(i){const r=i===3;s+=bar(x,1120+dn[i]/3,1398.3,2.57,r?R:'#6fc5cc')+bar(x,1120+dn[i]/3,1398.3,1.8,r?R:T)}});
document.getElementById('volC').innerHTML=s;
document.getElementById('lowfill').setAttribute('d','M484 752L'+document.getElementById('blue').getAttribute('points')+'V752z');

// squeeze each label to its column width
document.querySelectorAll('.fit').forEach(e=>{e.style.width='max-content';const w=+e.dataset.w,n=e.getBoundingClientRect().width;e.style.width=w+'px';
  const k=w/n;const inner=document.createElement('span');inner.style.cssText='display:inline-block;white-space:nowrap;transform-origin:0 50%;transform:scaleX('+k.toFixed(4)+')';
  while(e.firstChild)inner.appendChild(e.firstChild);e.appendChild(inner)});
</script>
</body>
</html>
